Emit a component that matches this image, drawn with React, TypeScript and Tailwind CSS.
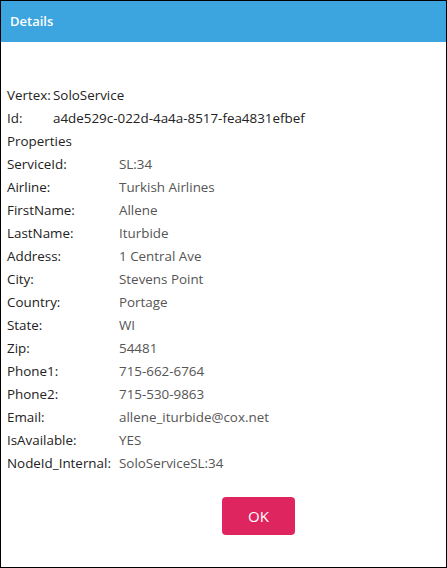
import React from 'react';

const props: Array<[string, string]> = [
  ['ServiceId:', 'SL:34'],
  ['Airline:', 'Turkish Airlines'],
  ['FirstName:', 'Allene'],
  ['LastName:', 'Iturbide'],
  ['Address:', '1 Central Ave'],
  ['City:', 'Stevens Point'],
  ['Country:', 'Portage'],
  ['State:', 'WI'],
  ['Zip:', '54481'],
  ['Phone1:', '715-662-6764'],
  ['Phone2:', '715-530-9863'],
  ['Email:', 'allene_iturbide@cox.net'],
  ['IsAvailable:', 'YES'],
  ['NodeId_Internal:', 'SoloServiceSL:34'],
];

export default function App() {
  return (
    <div
      className="w-[447px] h-[568px] border border-black bg-white flex flex-col"
      style={{ fontFamily: '"Open Sans", "Liberation Sans", sans-serif' }}
    >
      <div className="h-[41px] bg-[#3ca5df] flex items-center px-[9px]">
        <span className="text-white text-[13px] font-semibold">Details</span>
      </div>

      <div className="pt-[42px] px-[6px] text-[13.4px] leading-[23px]">
        <div className="flex">
          <span className="text-[#222] font-medium w-[46px]">Vertex:</span>
          <span className="text-[#222]">SoloService</span>
        </div>
        <div className="flex">
          <span className="text-[#222] font-medium w-[46px]">Id:</span>
          <span className="text-[#222]">a4de529c-022d-4a4a-8517-fea4831efbef</span>
        </div>
        <div className="text-[#222] font-medium">Properties</div>
        {props.map(([label, value]) => (
          <div key={label} className="flex">
            <span className="text-[#222] font-medium w-[112px]">{label}</span>
            <span className="text-[#555]">{value}</span>
          </div>
        ))}
      </div>

      <div className="flex pt-[22px] pl-[221px]">
        <button className="w-[73px] h-[38px] rounded-[4px] bg-[#df2560] text-white text-[15px]">
          OK
        </button>
      </div>
    </div>
  );
}
